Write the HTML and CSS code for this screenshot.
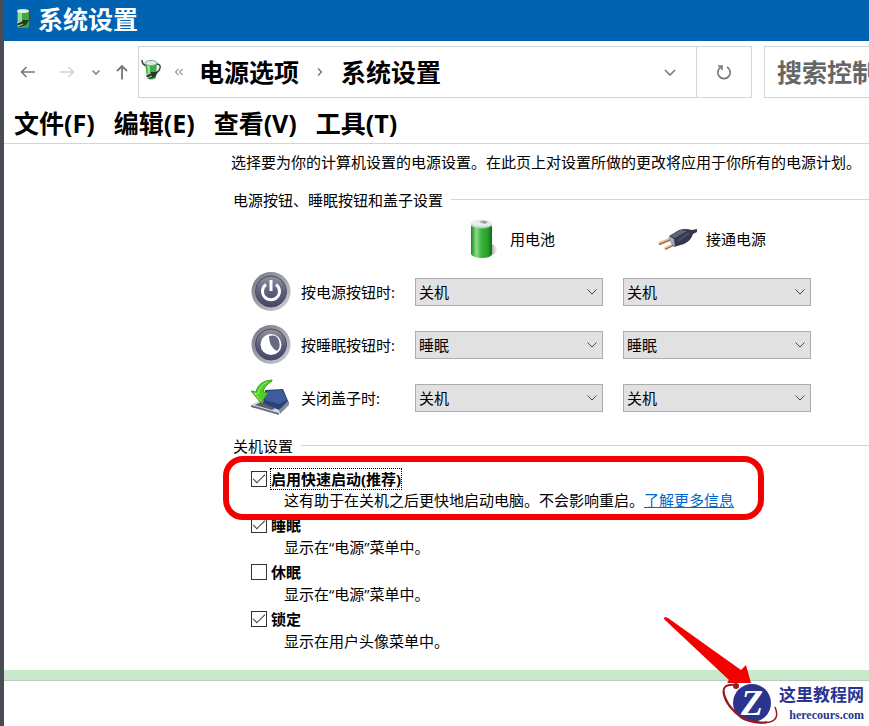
FILE: index.html
```html
<!DOCTYPE html>
<html lang="zh-CN">
<head>
    <meta charset="UTF-8">
    <meta name="viewport" content="width=device-width, initial-scale=1.0">
    <title>系统设置</title>
    <link rel="stylesheet" href="styles.css">
</head>
<body>
    <div class="window">
        <header class="titlebar">
            <svg class="title-icon" viewBox="0 0 18 22">
                <rect x="3" y="2" width="12" height="18" rx="2" fill="#3fa648"/>
                <rect x="4" y="4" width="4" height="14" fill="#8ee08a"/>
                <ellipse cx="9" cy="3" rx="6" ry="2" fill="#dfeedd"/>
                <path d="M15 5q3 2 0 8" fill="none" stroke="#3b4a5c" stroke-width="1.500"/>
                <path d="M3 16l6-4 6 0-3 5-6 2z" fill="#26372e"/>
                <path d="M3 15l5-2M4 18l5-2" stroke="#d9c9a0"/>
            </svg>
            <h1 class="title">系统设置</h1>
        </header>

        <nav class="navbar">
            <div class="nav-buttons">
                <button class="nav-btn" aria-label="后退">
                    <svg width="16" height="14" viewBox="0 0 16 14"><path d="M15 7H1.500M6.500 2L1.500 7l5 5" fill="none" stroke="#777" stroke-width="1.600"/></svg>
                </button>
                <button class="nav-btn disabled" aria-label="前进" disabled>
                    <svg width="16" height="14" viewBox="0 0 16 14"><path d="M1 7h13.500M9.500 2l5 5-5 5" fill="none" stroke="#d2d2d2" stroke-width="1.600"/></svg>
                </button>
                <button class="nav-btn recent" aria-label="最近浏览的位置">
                    <svg width="10" height="8" viewBox="0 0 10 8"><path d="M1.500 2.500L5 6l3.500-3.500" fill="none" stroke="#888" stroke-width="1.600"/></svg>
                </button>
                <button class="nav-btn" aria-label="上移">
                    <svg width="14" height="16" viewBox="0 0 14 16"><path d="M7 15.500V2M2 7l5-5 5 5" fill="none" stroke="#777" stroke-width="1.800"/></svg>
                </button>
            </div>
            <div class="address">
                <svg class="address-icon" viewBox="0 0 20 22">
                    <path d="M1 1q0 5 5 6" fill="none" stroke="#35444a" stroke-width="1.500"/>
                    <path d="M15 5q5 0 4 4-1 4-4 4" fill="none" stroke="#3b4a5c" stroke-width="1.500"/>
                    <path d="M4 4h12l-1 15q-5 3-9 0z" fill="#3fae45"/>
                    <path d="M6 5h3v12H7z" fill="#96e58e"/>
                    <ellipse cx="10" cy="4" rx="6" ry="2.500" fill="#dcebe2" stroke="#87a590"/>
                    <path d="M5 17l5-4 7 0-3 5-6 2z" fill="#26372e"/>
                    <path d="M5 16l5-2M6 19l5-2" stroke="#d9c9a0"/>
                </svg>
                <svg class="crumb-more" viewBox="0 0 10 8"><path d="M4.500 1L1.500 4l3 3M8.500 1l-3 3 3 3" fill="none" stroke="#555"/></svg>
                <span class="crumb">电源选项</span>
                <svg class="crumb-sep" viewBox="0 0 6 10"><path d="M1 1.500L4.500 5 1 8.500" fill="none" stroke="#777" stroke-width="1.400"/></svg>
                <span class="crumb">系统设置</span>
                <button class="address-drop" aria-label="以前的位置">
                    <svg width="12" height="8" viewBox="0 0 12 8"><path d="M1 2l5 5 5-5" fill="none" stroke="#777" stroke-width="1.600"/></svg>
                </button>
            </div>
            <button class="refresh" aria-label="刷新">
                <svg width="16" height="16" viewBox="0 0 16 16">
                    <path d="M11 3A6.200 6.200 0 1 1 5 3" fill="none" stroke="#777" stroke-width="1.700"/>
                    <path d="M2 2h4v4" fill="none" stroke="#777" stroke-width="1.600"/>
                </svg>
            </button>
            <input class="search" type="text" placeholder="搜索控制面板" aria-label="搜索控制面板">
        </nav>

        <div class="menubar">
            <button class="menu-item">文件(F)</button>
            <button class="menu-item">编辑(E)</button>
            <button class="menu-item">查看(V)</button>
            <button class="menu-item">工具(T)</button>
        </div>

        <main class="content">
            <p class="intro">选择要为你的计算机设置的电源设置。在此页上对设置所做的更改将应用于你所有的电源计划。</p>

            <section>
                <h2 class="group-title">电源按钮、睡眠按钮和盖子设置</h2>
                <div class="power-grid">
                    <div class="source battery">
                        <svg width="32" height="40" viewBox="0 0 32 40">
                            <defs>
                                <linearGradient id="cell">
                                    <stop offset="0" stop-color="#168a1d"/>
                                    <stop offset=".25" stop-color="#8fdc86"/>
                                    <stop offset=".5" stop-color="#38b437"/>
                                    <stop offset=".8" stop-color="#2c9c2c"/>
                                    <stop offset="1" stop-color="#0c6c14"/>
                                </linearGradient>
                                <linearGradient id="shade">
                                    <stop offset=".2" stop-color="#aaa"/>
                                    <stop offset="1" stop-color="#fff"/>
                                </linearGradient>
                            </defs>
                            <path d="M20 37l6-3q4-5-4-9z" fill="url(#shade)"/>
                            <path d="M1 5v30q2 4 11 4t10-4V5z" fill="url(#cell)"/>
                            <path d="M1 4v3q10 5 21 0V4z" fill="#b9d9bd"/>
                            <ellipse cx="11.500" cy="4" rx="10.500" ry="3.500" fill="#e7edf1"/>
                            <path d="M9 3q5-3 9 0l-3 2z" fill="#96a4aa"/>
                        </svg>
                        <span>用电池</span>
                    </div>
                    <div class="source plugged">
                        <svg width="40" height="24" viewBox="0 0 40 24">
                            <path d="M1 17l12-5M7 22l12-6" stroke="#9c663d" stroke-width="2.500"/>
                            <path d="M1 16l12-5M7 21l12-6" stroke="#efc28b" stroke-width="1.500"/>
                            <path d="M11 9l10-6q6-2 13 0l5-1v3l-4 2q-2 7-9 10l-10 3-4-6z" fill="#34384c"/>
                            <path d="M12 9l10-6 7 1-12 7z" fill="#60657d"/>
                            <path d="M11 9l5 3 1 8-5-5z" fill="#a6aab9"/>
                            <path d="M20 14l11-8" stroke="#4a5069" stroke-width="2"/>
                        </svg>
                        <span>接通电源</span>
                    </div>

                    <svg class="row-icon" viewBox="0 0 40 40">
                        <defs>
                            <linearGradient id="disc" x1="0" y1="0" x2="0" y2="1">
                                <stop offset="0" stop-color="#92949f"/>
                                <stop offset=".5" stop-color="#5d607a"/>
                                <stop offset="1" stop-color="#454769"/>
                            </linearGradient>
                            <linearGradient id="ring" x1="0" y1="0" x2="1" y2="1">
                                <stop offset="0" stop-color="#73747e"/>
                                <stop offset="1" stop-color="#d0d0d8"/>
                            </linearGradient>
                        </defs>
                        <circle cx="20" cy="19.500" r="19.500" fill="url(#ring)"/>
                        <circle cx="20" cy="19.500" r="15.500" fill="url(#disc)" stroke="#4a4b60"/>
                        <path d="M15 12.500a8.500 8.500 0 1 0 10 0" fill="none" stroke="#fff" stroke-width="3"/>
                        <path d="M20 8v11" stroke="#fff" stroke-width="3"/>
                    </svg>
                    <label class="row-label" for="power-battery">按电源按钮时:</label>
                    <div class="select">
                        <select id="power-battery"><option>关机</option><option>睡眠</option></select>
                        <svg class="arrow" viewBox="0 0 10 6"><path d="M.500.500L5 5 9.500.500" fill="none" stroke="#444"/></svg>
                    </div>
                    <div class="select">
                        <select aria-label="按电源按钮时,接通电源"><option>关机</option><option>睡眠</option></select>
                        <svg class="arrow" viewBox="0 0 10 6"><path d="M.500.500L5 5 9.500.500" fill="none" stroke="#444"/></svg>
                    </div>

                    <svg class="row-icon" viewBox="0 0 40 40">
                        <circle cx="20" cy="19.500" r="19.500" fill="url(#ring)"/>
                        <circle cx="20" cy="19.500" r="15.500" fill="url(#disc)" stroke="#4a4b60"/>
                        <circle cx="20" cy="19.500" r="10.500" fill="#fff"/>
                        <path d="M18 11q8-2 10 5 2 7-2 10-8-4-8-15z" fill="#666981"/>
                    </svg>
                    <label class="row-label" for="sleep-battery">按睡眠按钮时:</label>
                    <div class="select">
                        <select id="sleep-battery"><option>睡眠</option><option>关机</option></select>
                        <svg class="arrow" viewBox="0 0 10 6"><path d="M.500.500L5 5 9.500.500" fill="none" stroke="#444"/></svg>
                    </div>
                    <div class="select">
                        <select aria-label="按睡眠按钮时,接通电源"><option>睡眠</option><option>关机</option></select>
                        <svg class="arrow" viewBox="0 0 10 6"><path d="M.500.500L5 5 9.500.500" fill="none" stroke="#444"/></svg>
                    </div>

                    <svg class="row-icon" viewBox="0 0 40 40">
                        <path d="M0 27l9-5 22 5-2 8z" fill="#d5d8de"/>
                        <path d="M0 27l28 8v2L0 29z" fill="#696c76"/>
                        <path d="M4 27l6-3 16 5-5 3z" fill="#5c606b"/>
                        <path d="M14 12l18-1 6 14-10 7-16-7z" fill="#2a4079"/>
                        <path d="M16 13l15-1 5 10-8 4-14-4z" fill="#3e5ba0"/>
                        <path d="M37 23l1 4-9 9-1-4z" fill="#858b98"/>
                        <path d="M21 2Q7 3 5 14l-5-1 10 12 7-10-5-1Q13 8 21 3z" fill="#55cc2a" stroke="#2da313"/>
                        <path d="M16 4Q8 8 7 16l-4-1 7 8" fill="none" stroke="#9bee68"/>
                    </svg>
                    <label class="row-label" for="lid-battery">关闭盖子时:</label>
                    <div class="select">
                        <select id="lid-battery"><option>关机</option><option>睡眠</option></select>
                        <svg class="arrow" viewBox="0 0 10 6"><path d="M.500.500L5 5 9.500.500" fill="none" stroke="#444"/></svg>
                    </div>
                    <div class="select">
                        <select aria-label="关闭盖子时,接通电源"><option>关机</option><option>睡眠</option></select>
                        <svg class="arrow" viewBox="0 0 10 6"><path d="M.500.500L5 5 9.500.500" fill="none" stroke="#444"/></svg>
                    </div>
                </div>
            </section>

            <section>
                <h2 class="group-title">关机设置</h2>
                <div class="options">
                    <div class="option highlighted">
                        <div class="option-head">
                            <input type="checkbox" id="fast" checked>
                            <label class="focused" for="fast">启用快速启动(推荐)</label>
                        </div>
                        <p class="option-desc">这有助于在关机之后更快地启动电脑。不会影响重启。<a href="#">了解更多信息</a></p>
                    </div>
                    <div class="option">
                        <div class="option-head">
                            <input type="checkbox" id="sleep" checked>
                            <label for="sleep">睡眠</label>
                        </div>
                        <p class="option-desc">显示在“电源”菜单中。</p>
                    </div>
                    <div class="option">
                        <div class="option-head">
                            <input type="checkbox" id="hibernate">
                            <label for="hibernate">休眠</label>
                        </div>
                        <p class="option-desc">显示在“电源”菜单中。</p>
                    </div>
                    <div class="option">
                        <div class="option-head">
                            <input type="checkbox" id="lock" checked>
                            <label for="lock">锁定</label>
                        </div>
                        <p class="option-desc">显示在用户头像菜单中。</p>
                    </div>
                </div>
            </section>
        </main>

        <footer class="footer">
            <svg class="pointer" viewBox="0 0 88 66">
                <path d="M1 0Q-1 1 1 3l64 60-2 3h24L82 48l-5 5L4 1z" fill="#f40000"/>
            </svg>
            <div class="brand">
                <svg class="brand-logo" viewBox="0 0 56 44">
                    <circle cx="30" cy="21" r="19" fill="#29348f"/>
                    <path d="M14 3Q-1 1 2 13q3 12 17 22 15 8 26 5" fill="none" stroke="#951c20" stroke-width="2"/>
                    <path d="M53 25q5 12-5 15-9 2-18-2" fill="none" stroke="#951c20" stroke-width="1.500"/>
                    <path d="M2 8q2 14 17 26-8-4-14-12-5-8-3-14z" fill="#951c20"/>
                    <circle cx="14" cy="4" r="3" fill="#951c20"/>
                    <text class="brand-z" x="30" y="33" text-anchor="middle">Z</text>
                </svg>
                <div class="brand-text">
                    <span class="brand-name">这里教程网</span>
                    <span class="brand-url">herecours.com</span>
                </div>
            </div>
        </footer>
    </div>
</body>
</html>
```
FILE: styles.css
```css
:root {
    --blue: #0063b1;
    --line: #d4d4d4;
    --red: #f40000;
    --navy: #29348f;
}

* {
    margin: 0;
    padding: 0;
    box-sizing: border-box;
}

body {
    background: #fff;
    color: #000;
    font-family: "Open Sans", "Noto Sans CJK SC", sans-serif;
    font-size: 15px;
    line-height: 22px;
    overflow: hidden;
}

button,
input,
select {
    font: inherit;
    color: inherit;
    background: none;
    border: 0;
    border-radius: 0;
}

svg {
    display: block;
    flex: none;
}

.window {
    display: flex;
    flex-direction: column;
    min-height: 100vh;
    border-left: 4px solid #4a4c54;
}

/* title bar */
.titlebar {
    display: flex;
    align-items: center;
    gap: 6px;
    height: 41px;
    padding: 0 10px 4px;
    background: var(--blue);
    color: #fff;
}

.title-icon {
    width: 18px;
    height: 22px;
}

.title,
.crumb,
.search,
.menu-item {
    font-size: 25px;
    font-weight: 700;
    line-height: 36px;
    white-space: nowrap;
}

/* navigation */
.navbar {
    display: flex;
    height: 57px;
    padding-top: 5px;
}

.nav-buttons {
    display: flex;
    align-items: center;
    width: 134px;
    padding-left: 16px;
}

.nav-btn {
    margin-right: 23px;
}

.nav-btn.disabled {
    margin-right: 16px;
}

.nav-btn.recent {
    margin-right: 14px;
}

.nav-btn:last-child {
    margin-right: 0;
}

.address {
    display: flex;
    flex: 1;
    align-items: center;
    min-width: 0;
    border: 1px solid var(--line);
}

.address-icon {
    width: 20px;
    height: 22px;
    margin: 0 13px 4px 2px;
}

.crumb-more {
    width: 10px;
    height: 8px;
    margin-right: 15px;
}

.crumb-sep {
    width: 6px;
    height: 10px;
    margin: 0 18px;
}

.address-drop {
    margin: 0 20px 0 auto;
}

.refresh {
    display: flex;
    align-items: center;
    justify-content: center;
    width: 55px;
    border: 1px solid var(--line);
    border-left: 0;
}

.search {
    width: 105px;
    margin-left: 12px;
    padding-left: 12px;
    border: 1px solid var(--line);
    border-right: 0;
}

.search::placeholder {
    color: #666;
    opacity: 1;
}

.menubar {
    display: flex;
    gap: 19px;
    height: 46px;
    padding: 7px 10px 0;
    border-bottom: 1px solid var(--line);
}

.menu-item {
    height: 36px;
}

/* settings */
.content {
    flex: 1;
    padding: 7px 0 0 227px;
}

.intro {
    margin-bottom: 16px;
    white-space: nowrap;
}

.group-title {
    display: flex;
    align-items: center;
    gap: 8px;
    padding-left: 2px;
    font-size: 15px;
    font-weight: 400;
}

.group-title::after {
    content: "";
    flex: 1;
    height: 1px;
    margin-bottom: 2px;
    background: var(--line);
}

.power-grid {
    display: grid;
    grid-template-columns: 40px 84px 188px 188px;
    grid-auto-rows: 53px;
    column-gap: 20px;
    align-items: center;
    padding: 1px 0 11px 20px;
}

.source {
    display: flex;
    align-items: center;
    gap: 8px;
}

.battery {
    grid-column: 3;
    padding-left: 55px;
}

.plugged {
    padding-left: 35px;
}

.row-icon {
    width: 40px;
    height: 40px;
}

.row-label {
    margin-left: -10px;
    white-space: nowrap;
}

.select {
    position: relative;
}

.select select {
    appearance: none;
    display: block;
    width: 100%;
    height: 28px;
    padding: 0 24px 0 3px;
    background: #e1e1e1;
    border: 1px solid #adadad;
}

.arrow {
    position: absolute;
    top: 11px;
    right: 6px;
    width: 10px;
    height: 6px;
    pointer-events: none;
}

.options {
    display: flex;
    flex-direction: column;
    align-items: flex-start;
    gap: 3px;
    padding: 12px 0 17px 20px;
}

.option-head {
    display: flex;
    align-items: center;
    gap: 4px;
    font-weight: 700;
}

.option-head input {
    appearance: none;
    display: grid;
    place-items: center;
    width: 16px;
    height: 16px;
    background: #fff;
    border: 1px solid #333;
}

.option-head input:checked::after {
    content: "";
    width: 11px;
    height: 5px;
    margin-bottom: 4px;
    border: solid #333;
    border-width: 0 0 1px 1px;
    transform: rotate(-45deg);
}

.option-head .focused {
    line-height: 20px;
    outline: 1px dotted #000;
}

.option-desc {
    padding-left: 33px;
    white-space: nowrap;
}

.option-desc a {
    color: #0066cc;
}

.highlighted {
    position: relative;
}

.highlighted::after {
    content: "";
    position: absolute;
    inset: -13px -30px -9px -28px;
    border: 6px solid var(--red);
    border-radius: 20px;
    pointer-events: none;
}

/* footer */
.footer {
    position: relative;
    display: flex;
    justify-content: flex-end;
    height: 56px;
    padding: 12px 5px 0 0;
    border-top: 10px solid #c9e9cd;
    box-shadow: inset 0 1px #b9cbbc;
}

.pointer {
    position: absolute;
    right: 117px;
    bottom: 43px;
    width: 88px;
    height: 66px;
}

.brand {
    display: flex;
    gap: 1px;
    height: 44px;
    margin-top: -10px;
    color: var(--navy);
}

.brand-logo {
    width: 56px;
    height: 44px;
}

.brand-z {
    font: italic 700 36px "Liberation Serif", serif;
    fill: #fff;
}

.brand-text {
    display: flex;
    flex-direction: column;
    align-items: flex-end;
    font-weight: 700;
}

.brand-name {
    font-size: 17px;
    line-height: 26px;
}

.brand-url {
    font-family: "Liberation Serif", serif;
    font-size: 12px;
    line-height: 14px;
}
```
